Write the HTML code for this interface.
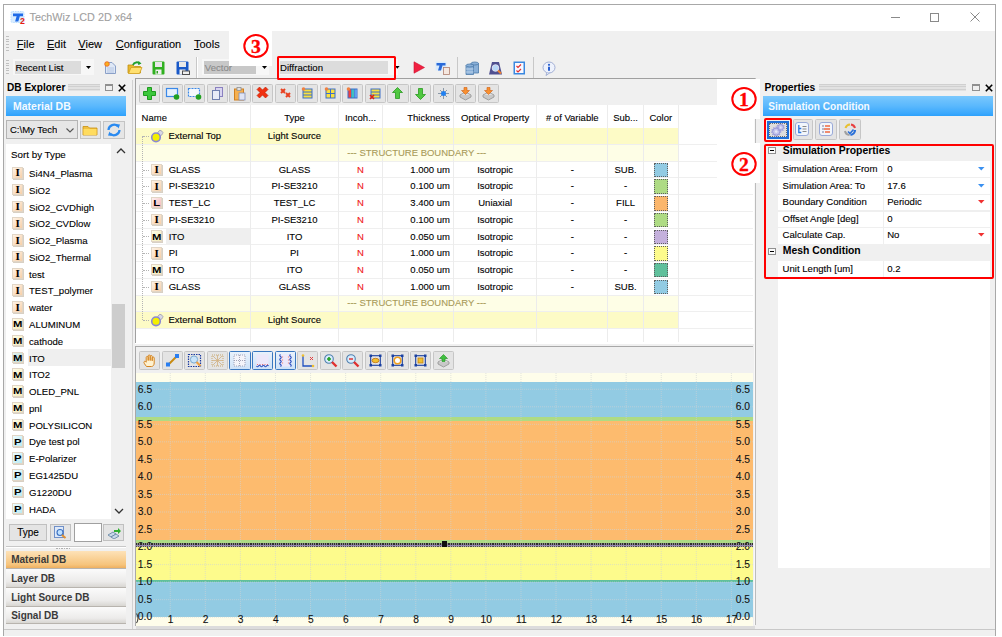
<!DOCTYPE html>
<html><head><meta charset="utf-8">
<style>
html,body{margin:0;padding:0;}
body{width:1002px;height:637px;position:relative;overflow:hidden;background:#fff;font-family:"Liberation Sans", sans-serif;color:#000;}
body div, body svg{position:absolute;}
.t{-webkit-text-stroke:0.1px currentColor;}
</style></head><body>
<div style="left:3.00px;top:4.00px;width:993.00px;height:632.00px;background:#f0f0f0;"></div>
<div style="left:3.00px;top:4.00px;width:993.00px;height:1.00px;background:#a8a8a8;"></div>
<div style="left:3.00px;top:4.00px;width:1.00px;height:632.00px;background:#a8a8a8;"></div>
<div style="left:995.00px;top:4.00px;width:1.00px;height:632.00px;background:#a8a8a8;"></div>
<div style="left:4.00px;top:5.00px;width:991.00px;height:26.00px;background:#fff;"></div>
<svg style="left:9.60px;top:9.80px;" width="16" height="15" viewBox="0 0 16 15"><rect x="1" y="1.5" width="13" height="11" rx="1.5" fill="#d8ecff" stroke="#b8dcff" stroke-width="1" stroke-dasharray="1.5 1"/><path d="M3 3.5h10v2.7h-3.2l-1.5 5.3h-3.2l1.5-5.3h-3.6z" fill="#1e6ae8"/><text x="10" y="13.6" font-family="Liberation Sans" font-weight="bold" font-size="8.8" fill="#e81c10">2</text></svg>
<div class="t" style="left:29.50px;top:12.46px;font-size:10.8px;line-height:10.8px;white-space:nowrap;color:#a0a0a0;">TechWiz LCD 2D x64</div>
<div style="left:890.50px;top:17.00px;width:9.00px;height:1.00px;background:#8a8a8a;"></div>
<div style="left:930.00px;top:12.50px;width:9.00px;height:9.00px;border:1px solid #8a8a8a;box-sizing:border-box;"></div>
<svg style="left:970.00px;top:12.00px;" width="10" height="10" viewBox="0 0 10 10"><path d="M0.5 0.5L9.5 9.5M9.5 0.5L0.5 9.5" stroke="#8a8a8a" stroke-width="1"/></svg>
<div style="left:6.00px;top:36.00px;width:3.00px;height:1.00px;background:#c0c0c0;"></div>
<div style="left:6.00px;top:38.70px;width:3.00px;height:1.00px;background:#c0c0c0;"></div>
<div style="left:6.00px;top:41.40px;width:3.00px;height:1.00px;background:#c0c0c0;"></div>
<div style="left:6.00px;top:44.10px;width:3.00px;height:1.00px;background:#c0c0c0;"></div>
<div style="left:6.00px;top:46.80px;width:3.00px;height:1.00px;background:#c0c0c0;"></div>
<div style="left:6.00px;top:49.50px;width:3.00px;height:1.00px;background:#c0c0c0;"></div>
<div class="t" style="left:16.80px;top:38.69px;font-size:11px;line-height:11px;white-space:nowrap;color:#000;"><u style="text-decoration-thickness:1px;text-underline-offset:1px">F</u>ile</div>
<div class="t" style="left:47.00px;top:38.69px;font-size:11px;line-height:11px;white-space:nowrap;color:#000;"><u style="text-decoration-thickness:1px;text-underline-offset:1px">E</u>dit</div>
<div class="t" style="left:78.30px;top:38.69px;font-size:11px;line-height:11px;white-space:nowrap;color:#000;"><u style="text-decoration-thickness:1px;text-underline-offset:1px">V</u>iew</div>
<div class="t" style="left:115.80px;top:38.69px;font-size:11px;line-height:11px;white-space:nowrap;color:#000;"><u style="text-decoration-thickness:1px;text-underline-offset:1px">C</u>onfiguration</div>
<div class="t" style="left:194.00px;top:38.69px;font-size:11px;line-height:11px;white-space:nowrap;color:#000;"><u style="text-decoration-thickness:1px;text-underline-offset:1px">T</u>ools</div>
<div style="left:6.00px;top:60.00px;width:3.00px;height:1.00px;background:#c0c0c0;"></div>
<div style="left:6.00px;top:62.50px;width:3.00px;height:1.00px;background:#c0c0c0;"></div>
<div style="left:6.00px;top:65.00px;width:3.00px;height:1.00px;background:#c0c0c0;"></div>
<div style="left:6.00px;top:67.50px;width:3.00px;height:1.00px;background:#c0c0c0;"></div>
<div style="left:6.00px;top:70.00px;width:3.00px;height:1.00px;background:#c0c0c0;"></div>
<div style="left:6.00px;top:72.50px;width:3.00px;height:1.00px;background:#c0c0c0;"></div>
<div style="left:13.30px;top:59.00px;width:80.30px;height:16.00px;background:#f7f7f7;"></div>
<div style="left:15.00px;top:61.00px;width:65.70px;height:13.00px;background:#dcdcdc;"></div>
<div class="t" style="left:15.50px;top:63.47px;font-size:9.6px;line-height:9.6px;white-space:nowrap;color:#000;">Recent List</div>
<svg style="left:86.00px;top:65.50px;" width="5" height="3" viewBox="0 0 5 3"><path d="M0 0h5l-2.5 3z" fill="#000"/></svg>
<div style="left:196.00px;top:57.00px;width:1.00px;height:21.00px;background:#c8c8c8;"></div>
<div style="left:197.00px;top:57.00px;width:1.00px;height:21.00px;background:#fff;"></div>
<div style="left:202.40px;top:59.00px;width:66.60px;height:16.00px;background:#f7f7f7;"></div>
<div style="left:204.00px;top:61.00px;width:51.70px;height:13.00px;background:#c8c8c8;"></div>
<div style="left:228.60px;top:31.00px;width:43.60px;height:35.00px;background:#fff;"></div>
<svg style="left:261.50px;top:65.80px;" width="5" height="3" viewBox="0 0 5 3"><path d="M0 0h5l-2.5 3z" fill="#000"/></svg>
<div style="left:280.00px;top:59.00px;width:118.00px;height:16.00px;background:#f7f7f7;"></div>
<div style="left:279.60px;top:61.20px;width:108.80px;height:12.60px;background:#dcdcdc;"></div>
<div class="t" style="left:280.00px;top:63.47px;font-size:9.6px;line-height:9.6px;white-space:nowrap;color:#000;">Diffraction</div>
<svg style="left:394.60px;top:66.30px;" width="5" height="3" viewBox="0 0 5 3"><path d="M0 0h4.6l-2.3 2.8z" fill="#000"/></svg>
<div style="left:457.00px;top:57.00px;width:1.00px;height:21.00px;background:#c8c8c8;"></div>
<div style="left:533.00px;top:57.00px;width:1.00px;height:21.00px;background:#c8c8c8;"></div>
<div style="left:4.00px;top:629.00px;width:991.00px;height:1.00px;background:#c8c8c8;"></div>
<svg style="left:242.40px;top:31.60px;" width="28" height="28" viewBox="0 0 28 28"><ellipse cx="14" cy="14" rx="11.7" ry="11.05" fill="none" stroke="#f00" stroke-width="2"/><text x="14" y="20.9" text-anchor="middle" font-family="Liberation Serif" font-weight="bold" font-size="19.6" fill="#f00" stroke="#f00" stroke-width="0.35">3</text></svg>
<div class="t" style="left:204.80px;top:63.47px;font-size:9.6px;line-height:9.6px;white-space:nowrap;color:#8a8a8a;">Vector</div>
<svg style="left:104.00px;top:60.50px;" width="13" height="14" viewBox="0 0 13 14"><path d="M1.5 1.5h6.5l3.5 3.5v7.5h-10z" fill="#dfe8f6" stroke="#8aa0c8" stroke-width="1"/><path d="M3 7h7M3 9h7M3 11h7" stroke="#a8bce0" stroke-width="0.8"/><circle cx="3" cy="3" r="2.3" fill="#f8b020" stroke="#f06020" stroke-width="0.8"/></svg>
<svg style="left:126.50px;top:59.50px;" width="16" height="15" viewBox="0 0 16 15"><path d="M1 5h5l1.5 1.5h6v6.5H1z" fill="#e8b830" stroke="#c09010" stroke-width="0.8"/><path d="M1.5 13.5l2.5-6h11l-2.5 6z" fill="#ffe070" stroke="#d0a020" stroke-width="0.8"/><path d="M6 5a4 4 0 0 1 7-1" stroke="#20a030" stroke-width="2" fill="none"/><path d="M11.5 1l3 2.5l-3.5 1.5z" fill="#20a030"/></svg>
<svg style="left:151.50px;top:60.50px;" width="13" height="14" viewBox="0 0 13 14"><rect x="0.5" y="0.5" width="12" height="13" rx="1" fill="#30b020"/><rect x="3" y="1" width="7" height="5" fill="#e8e8e8"/><rect x="3.5" y="8.5" width="6" height="5" fill="#f0f0f0"/><rect x="4.5" y="10" width="1.5" height="2.5" fill="#30a020"/></svg>
<svg style="left:175.50px;top:60.50px;" width="14" height="14" viewBox="0 0 14 14"><rect x="0.5" y="0.5" width="12" height="13" rx="1" fill="#1858c8"/><rect x="3" y="1" width="7" height="5" fill="#e8e8e8"/><rect x="3.5" y="8.5" width="6" height="5" fill="#f0f0f0"/><rect x="6" y="9.5" width="8" height="4.5" fill="#505050"/><rect x="7" y="10.5" width="6" height="2.5" fill="#f0f0f0"/></svg>
<svg style="left:412.50px;top:61.00px;" width="12" height="13" viewBox="0 0 12 13"><path d="M1 0.8L11.5 6.5L1 12.2z" fill="#f02040" stroke="#d01030" stroke-width="0.6"/></svg>
<svg style="left:435.00px;top:60.50px;" width="16" height="14" viewBox="0 0 16 14"><rect x="0.5" y="0.5" width="11" height="9" fill="#d4eaff" opacity="0.8"/><path d="M1.5 2h9v2.5h-3l-1.5 5h-3l1.5-5h-3z" fill="#2a6ad8"/><rect x="8.5" y="6.5" width="6" height="7" fill="#f6e8e0" stroke="#b08070" stroke-width="0.8"/></svg>
<svg style="left:464.50px;top:60.50px;" width="15" height="14" viewBox="0 0 15 14"><g fill="#8ab0d8" stroke="#4a78a8" stroke-width="0.8"><path d="M6 2.5h7.5v9.5h-7.5z"/><ellipse cx="9.75" cy="2.5" rx="3.75" ry="1.5"/><path d="M1 4.5h7.5v9h-7.5z"/><ellipse cx="4.75" cy="4.5" rx="3.75" ry="1.5"/></g><path d="M1 8h7.5M1 11h7.5" stroke="#c8dcf0" stroke-width="0.8"/></svg>
<svg style="left:488.00px;top:60.50px;" width="15" height="14" viewBox="0 0 15 14"><path d="M1 13.5L4 1h7l3 12.5z" fill="#505090"/><circle cx="7.5" cy="7" r="3.3" fill="#b8d8f8" stroke="#e0e0f0" stroke-width="1"/><path d="M10 9.5l3 3" stroke="#f08030" stroke-width="2"/></svg>
<svg style="left:512.50px;top:60.50px;" width="13" height="14" viewBox="0 0 13 14"><rect x="0.5" y="0.5" width="11.5" height="13" fill="#3a88e0"/><rect x="2" y="2" width="8.5" height="10" fill="#f8f8ff"/><path d="M3.5 5l1.5 1.5l3-3M3.5 9.5l1.5 1.5l3-3" stroke="#e03030" stroke-width="1.2" fill="none"/></svg>
<svg style="left:541.50px;top:60.50px;" width="14" height="15" viewBox="0 0 14 15"><ellipse cx="7" cy="6.5" rx="6" ry="5.5" fill="#eef2fc" stroke="#9aa8d0" stroke-width="0.9"/><path d="M5 11.5l-1 3l3.5-2.5" fill="#eef2fc" stroke="#9aa8d0" stroke-width="0.9"/><circle cx="7" cy="3.8" r="1.1" fill="#2a60d0"/><path d="M7 5.8v4" stroke="#2a60d0" stroke-width="2"/></svg>
<div style="left:7.00px;top:83.25px;font-size:10.1px;line-height:10.1px;white-space:nowrap;font-weight:bold;">DB Explorer</div>
<div style="left:67.50px;top:83.80px;width:32.50px;height:6.80px;background:repeating-linear-gradient(#d0d0d0 0 1.2px,#e2e2e2 1.2px 2.3px);"></div>
<div style="left:105.00px;top:83.50px;width:8.00px;height:7.50px;border:1px solid #909090;border-top-width:2px;box-sizing:border-box;"></div>
<svg style="left:118.00px;top:84.00px;" width="8" height="8" viewBox="0 0 8 8"><path d="M0.8 0.8L7.2 7.2M7.2 0.8L0.8 7.2" stroke="#000" stroke-width="1.6"/></svg>
<div style="left:6.00px;top:96.20px;width:120.00px;height:20.20px;background:linear-gradient(#7ac8fd,#5ab8fd 50%,#3aa8fd 88%,#2ca0fb);"></div>
<div style="left:13.00px;top:101.41px;font-size:10.5px;line-height:10.5px;white-space:nowrap;font-weight:bold;color:#f4faff;">Material DB</div>
<div style="left:6.00px;top:120.40px;width:71.60px;height:19.00px;background:#e6e6e6;border:1px solid #b4b4b4;box-sizing:border-box;"></div>
<div class="t" style="left:10.00px;top:125.26px;font-size:9.5px;line-height:9.5px;white-space:nowrap;color:#000;overflow:hidden;width:47px;">C:\My TechV</div>
<svg style="left:66.00px;top:128.00px;" width="8" height="5" viewBox="0 0 8 5"><path d="M0.5 0.5L4 4L7.5 0.5" stroke="#555" stroke-width="1.1" fill="none"/></svg>
<div style="left:79.50px;top:120.70px;width:21.30px;height:18.60px;background:#e6e6e6;border:1px solid #c4c4c4;box-sizing:border-box;"></div>
<svg style="left:82.00px;top:124.00px;" width="16" height="12" viewBox="0 0 16 12"><path d="M1 2.5h5l1.5 1.5h7.5v7H1z" fill="#f0c040" stroke="#c89010" stroke-width="0.8"/><rect x="1.5" y="5" width="13" height="6" fill="#ffdc60"/></svg>
<div style="left:103.00px;top:120.70px;width:21.70px;height:18.60px;background:#e6e6e6;border:1px solid #c4c4c4;box-sizing:border-box;"></div>
<svg style="left:106.00px;top:123.00px;" width="16" height="14" viewBox="0 0 16 14"><path d="M2.5 7A5.5 5.5 0 0 1 12 3.5" stroke="#2a8af0" stroke-width="2.2" fill="none"/><path d="M13.5 7A5.5 5.5 0 0 1 4 10.5" stroke="#2a8af0" stroke-width="2.2" fill="none"/><path d="M10 1l4 0.5l-1.5 4z M6 13l-4-0.5l1.5-4z" fill="#2a8af0"/></svg>
<div style="left:5.70px;top:143.80px;width:105.50px;height:375.20px;background:#fff;"></div>
<div class="t" style="left:11.00px;top:149.90px;font-size:9.8px;line-height:9.8px;white-space:nowrap;color:#000;">Sort by Type</div>
<svg style="left:116.00px;top:148.00px;" width="10" height="6" viewBox="0 0 10 6"><path d="M1 5L5 1L9 5" stroke="#333" stroke-width="1.3" fill="none"/></svg>
<div style="left:13.00px;top:168.00px;width:11.30px;height:11.50px;background:#d8d0c4;"></div>
<div style="left:12.00px;top:167.00px;width:11.30px;height:11.50px;background:linear-gradient(135deg,#fff3e6,#f6cfa8);border:1px solid #e2d6c6;box-sizing:border-box;"></div>
<div style="left:12.00px;top:167.49px;font-size:11px;line-height:11px;white-space:nowrap;width:11.30px;text-align:center;font-family:'Liberation Serif',serif;font-weight:bold;">I</div>
<div class="t" style="left:29.00px;top:168.97px;font-size:9.6px;line-height:9.6px;white-space:nowrap;color:#000;">Si4N4_Plasma</div>
<div style="left:13.00px;top:184.78px;width:11.30px;height:11.50px;background:#d8d0c4;"></div>
<div style="left:12.00px;top:183.78px;width:11.30px;height:11.50px;background:linear-gradient(135deg,#fff3e6,#f6cfa8);border:1px solid #e2d6c6;box-sizing:border-box;"></div>
<div style="left:12.00px;top:184.27px;font-size:11px;line-height:11px;white-space:nowrap;width:11.30px;text-align:center;font-family:'Liberation Serif',serif;font-weight:bold;">I</div>
<div class="t" style="left:29.00px;top:185.75px;font-size:9.6px;line-height:9.6px;white-space:nowrap;color:#000;">SiO2</div>
<div style="left:13.00px;top:201.56px;width:11.30px;height:11.50px;background:#d8d0c4;"></div>
<div style="left:12.00px;top:200.56px;width:11.30px;height:11.50px;background:linear-gradient(135deg,#fff3e6,#f6cfa8);border:1px solid #e2d6c6;box-sizing:border-box;"></div>
<div style="left:12.00px;top:201.05px;font-size:11px;line-height:11px;white-space:nowrap;width:11.30px;text-align:center;font-family:'Liberation Serif',serif;font-weight:bold;">I</div>
<div class="t" style="left:29.00px;top:202.53px;font-size:9.6px;line-height:9.6px;white-space:nowrap;color:#000;">SiO2_CVDhigh</div>
<div style="left:13.00px;top:218.34px;width:11.30px;height:11.50px;background:#d8d0c4;"></div>
<div style="left:12.00px;top:217.34px;width:11.30px;height:11.50px;background:linear-gradient(135deg,#fff3e6,#f6cfa8);border:1px solid #e2d6c6;box-sizing:border-box;"></div>
<div style="left:12.00px;top:217.83px;font-size:11px;line-height:11px;white-space:nowrap;width:11.30px;text-align:center;font-family:'Liberation Serif',serif;font-weight:bold;">I</div>
<div class="t" style="left:29.00px;top:219.31px;font-size:9.6px;line-height:9.6px;white-space:nowrap;color:#000;">SiO2_CVDlow</div>
<div style="left:13.00px;top:235.12px;width:11.30px;height:11.50px;background:#d8d0c4;"></div>
<div style="left:12.00px;top:234.12px;width:11.30px;height:11.50px;background:linear-gradient(135deg,#fff3e6,#f6cfa8);border:1px solid #e2d6c6;box-sizing:border-box;"></div>
<div style="left:12.00px;top:234.61px;font-size:11px;line-height:11px;white-space:nowrap;width:11.30px;text-align:center;font-family:'Liberation Serif',serif;font-weight:bold;">I</div>
<div class="t" style="left:29.00px;top:236.09px;font-size:9.6px;line-height:9.6px;white-space:nowrap;color:#000;">SiO2_Plasma</div>
<div style="left:13.00px;top:251.90px;width:11.30px;height:11.50px;background:#d8d0c4;"></div>
<div style="left:12.00px;top:250.90px;width:11.30px;height:11.50px;background:linear-gradient(135deg,#fff3e6,#f6cfa8);border:1px solid #e2d6c6;box-sizing:border-box;"></div>
<div style="left:12.00px;top:251.39px;font-size:11px;line-height:11px;white-space:nowrap;width:11.30px;text-align:center;font-family:'Liberation Serif',serif;font-weight:bold;">I</div>
<div class="t" style="left:29.00px;top:252.87px;font-size:9.6px;line-height:9.6px;white-space:nowrap;color:#000;">SiO2_Thermal</div>
<div style="left:13.00px;top:268.68px;width:11.30px;height:11.50px;background:#d8d0c4;"></div>
<div style="left:12.00px;top:267.68px;width:11.30px;height:11.50px;background:linear-gradient(135deg,#fff3e6,#f6cfa8);border:1px solid #e2d6c6;box-sizing:border-box;"></div>
<div style="left:12.00px;top:268.17px;font-size:11px;line-height:11px;white-space:nowrap;width:11.30px;text-align:center;font-family:'Liberation Serif',serif;font-weight:bold;">I</div>
<div class="t" style="left:29.00px;top:269.65px;font-size:9.6px;line-height:9.6px;white-space:nowrap;color:#000;">test</div>
<div style="left:13.00px;top:285.46px;width:11.30px;height:11.50px;background:#d8d0c4;"></div>
<div style="left:12.00px;top:284.46px;width:11.30px;height:11.50px;background:linear-gradient(135deg,#fff3e6,#f6cfa8);border:1px solid #e2d6c6;box-sizing:border-box;"></div>
<div style="left:12.00px;top:284.95px;font-size:11px;line-height:11px;white-space:nowrap;width:11.30px;text-align:center;font-family:'Liberation Serif',serif;font-weight:bold;">I</div>
<div class="t" style="left:29.00px;top:286.43px;font-size:9.6px;line-height:9.6px;white-space:nowrap;color:#000;">TEST_polymer</div>
<div style="left:13.00px;top:302.24px;width:11.30px;height:11.50px;background:#d8d0c4;"></div>
<div style="left:12.00px;top:301.24px;width:11.30px;height:11.50px;background:linear-gradient(135deg,#fff3e6,#f6cfa8);border:1px solid #e2d6c6;box-sizing:border-box;"></div>
<div style="left:12.00px;top:301.73px;font-size:11px;line-height:11px;white-space:nowrap;width:11.30px;text-align:center;font-family:'Liberation Serif',serif;font-weight:bold;">I</div>
<div class="t" style="left:29.00px;top:303.21px;font-size:9.6px;line-height:9.6px;white-space:nowrap;color:#000;">water</div>
<div style="left:13.00px;top:319.02px;width:11.30px;height:11.50px;background:#d8d0c4;"></div>
<div style="left:12.00px;top:318.02px;width:11.30px;height:11.50px;background:linear-gradient(135deg,#fffde8,#f4ecb8);border:1px solid #e2d6c6;box-sizing:border-box;"></div>
<div style="left:12.00px;top:319.22px;font-size:9.8px;line-height:9.8px;white-space:nowrap;width:11.30px;text-align:center;font-weight:bold;transform:scaleX(1.15);">M</div>
<div class="t" style="left:29.00px;top:319.99px;font-size:9.6px;line-height:9.6px;white-space:nowrap;color:#000;">ALUMINUM</div>
<div style="left:13.00px;top:335.80px;width:11.30px;height:11.50px;background:#d8d0c4;"></div>
<div style="left:12.00px;top:334.80px;width:11.30px;height:11.50px;background:linear-gradient(135deg,#fffde8,#f4ecb8);border:1px solid #e2d6c6;box-sizing:border-box;"></div>
<div style="left:12.00px;top:336.00px;font-size:9.8px;line-height:9.8px;white-space:nowrap;width:11.30px;text-align:center;font-weight:bold;transform:scaleX(1.15);">M</div>
<div class="t" style="left:29.00px;top:336.77px;font-size:9.6px;line-height:9.6px;white-space:nowrap;color:#000;">cathode</div>
<div style="left:28.00px;top:348.58px;width:83.00px;height:17.00px;background:#efefef;"></div>
<div style="left:13.00px;top:352.58px;width:11.30px;height:11.50px;background:#d8d0c4;"></div>
<div style="left:12.00px;top:351.58px;width:11.30px;height:11.50px;background:linear-gradient(135deg,#e6f4f0,#b4d8d0);border:1px solid #e2d6c6;box-sizing:border-box;"></div>
<div style="left:12.00px;top:352.78px;font-size:9.8px;line-height:9.8px;white-space:nowrap;width:11.30px;text-align:center;font-weight:bold;transform:scaleX(1.15);">M</div>
<div class="t" style="left:29.00px;top:353.55px;font-size:9.6px;line-height:9.6px;white-space:nowrap;color:#000;">ITO</div>
<div style="left:13.00px;top:369.36px;width:11.30px;height:11.50px;background:#d8d0c4;"></div>
<div style="left:12.00px;top:368.36px;width:11.30px;height:11.50px;background:linear-gradient(135deg,#fffde8,#f4ecb8);border:1px solid #e2d6c6;box-sizing:border-box;"></div>
<div style="left:12.00px;top:369.56px;font-size:9.8px;line-height:9.8px;white-space:nowrap;width:11.30px;text-align:center;font-weight:bold;transform:scaleX(1.15);">M</div>
<div class="t" style="left:29.00px;top:370.33px;font-size:9.6px;line-height:9.6px;white-space:nowrap;color:#000;">ITO2</div>
<div style="left:13.00px;top:386.14px;width:11.30px;height:11.50px;background:#d8d0c4;"></div>
<div style="left:12.00px;top:385.14px;width:11.30px;height:11.50px;background:linear-gradient(135deg,#fffde8,#f4ecb8);border:1px solid #e2d6c6;box-sizing:border-box;"></div>
<div style="left:12.00px;top:386.34px;font-size:9.8px;line-height:9.8px;white-space:nowrap;width:11.30px;text-align:center;font-weight:bold;transform:scaleX(1.15);">M</div>
<div class="t" style="left:29.00px;top:387.11px;font-size:9.6px;line-height:9.6px;white-space:nowrap;color:#000;">OLED_PNL</div>
<div style="left:13.00px;top:402.92px;width:11.30px;height:11.50px;background:#d8d0c4;"></div>
<div style="left:12.00px;top:401.92px;width:11.30px;height:11.50px;background:linear-gradient(135deg,#fffde8,#f4ecb8);border:1px solid #e2d6c6;box-sizing:border-box;"></div>
<div style="left:12.00px;top:403.12px;font-size:9.8px;line-height:9.8px;white-space:nowrap;width:11.30px;text-align:center;font-weight:bold;transform:scaleX(1.15);">M</div>
<div class="t" style="left:29.00px;top:403.89px;font-size:9.6px;line-height:9.6px;white-space:nowrap;color:#000;">pnl</div>
<div style="left:13.00px;top:419.70px;width:11.30px;height:11.50px;background:#d8d0c4;"></div>
<div style="left:12.00px;top:418.70px;width:11.30px;height:11.50px;background:linear-gradient(135deg,#fffde8,#f4ecb8);border:1px solid #e2d6c6;box-sizing:border-box;"></div>
<div style="left:12.00px;top:419.90px;font-size:9.8px;line-height:9.8px;white-space:nowrap;width:11.30px;text-align:center;font-weight:bold;transform:scaleX(1.15);">M</div>
<div class="t" style="left:29.00px;top:420.67px;font-size:9.6px;line-height:9.6px;white-space:nowrap;color:#000;">POLYSILICON</div>
<div style="left:13.00px;top:436.48px;width:11.30px;height:11.50px;background:#d8d0c4;"></div>
<div style="left:12.00px;top:435.48px;width:11.30px;height:11.50px;background:linear-gradient(135deg,#eefcff,#b8eaf2);border:1px solid #e2d6c6;box-sizing:border-box;"></div>
<div style="left:12.00px;top:436.68px;font-size:9.8px;line-height:9.8px;white-space:nowrap;width:11.30px;text-align:center;font-weight:bold;transform:scaleX(1.15);">P</div>
<div class="t" style="left:29.00px;top:437.45px;font-size:9.6px;line-height:9.6px;white-space:nowrap;color:#000;">Dye test pol</div>
<div style="left:13.00px;top:453.26px;width:11.30px;height:11.50px;background:#d8d0c4;"></div>
<div style="left:12.00px;top:452.26px;width:11.30px;height:11.50px;background:linear-gradient(135deg,#eefcff,#b8eaf2);border:1px solid #e2d6c6;box-sizing:border-box;"></div>
<div style="left:12.00px;top:453.46px;font-size:9.8px;line-height:9.8px;white-space:nowrap;width:11.30px;text-align:center;font-weight:bold;transform:scaleX(1.15);">P</div>
<div class="t" style="left:29.00px;top:454.23px;font-size:9.6px;line-height:9.6px;white-space:nowrap;color:#000;">E-Polarizer</div>
<div style="left:13.00px;top:470.04px;width:11.30px;height:11.50px;background:#d8d0c4;"></div>
<div style="left:12.00px;top:469.04px;width:11.30px;height:11.50px;background:linear-gradient(135deg,#eefcff,#b8eaf2);border:1px solid #e2d6c6;box-sizing:border-box;"></div>
<div style="left:12.00px;top:470.24px;font-size:9.8px;line-height:9.8px;white-space:nowrap;width:11.30px;text-align:center;font-weight:bold;transform:scaleX(1.15);">P</div>
<div class="t" style="left:29.00px;top:471.01px;font-size:9.6px;line-height:9.6px;white-space:nowrap;color:#000;">EG1425DU</div>
<div style="left:13.00px;top:486.82px;width:11.30px;height:11.50px;background:#d8d0c4;"></div>
<div style="left:12.00px;top:485.82px;width:11.30px;height:11.50px;background:linear-gradient(135deg,#eefcff,#b8eaf2);border:1px solid #e2d6c6;box-sizing:border-box;"></div>
<div style="left:12.00px;top:487.02px;font-size:9.8px;line-height:9.8px;white-space:nowrap;width:11.30px;text-align:center;font-weight:bold;transform:scaleX(1.15);">P</div>
<div class="t" style="left:29.00px;top:487.79px;font-size:9.6px;line-height:9.6px;white-space:nowrap;color:#000;">G1220DU</div>
<div style="left:13.00px;top:503.60px;width:11.30px;height:11.50px;background:#d8d0c4;"></div>
<div style="left:12.00px;top:502.60px;width:11.30px;height:11.50px;background:linear-gradient(135deg,#eefcff,#b8eaf2);border:1px solid #e2d6c6;box-sizing:border-box;"></div>
<div style="left:12.00px;top:503.80px;font-size:9.8px;line-height:9.8px;white-space:nowrap;width:11.30px;text-align:center;font-weight:bold;transform:scaleX(1.15);">P</div>
<div class="t" style="left:29.00px;top:504.57px;font-size:9.6px;line-height:9.6px;white-space:nowrap;color:#000;">HADA</div>
<div style="left:112.40px;top:304.30px;width:12.60px;height:63.70px;background:#cdcdcd;"></div>
<svg style="left:114.00px;top:508.00px;" width="10" height="6" viewBox="0 0 10 6"><path d="M1 1L5 5L9 1" stroke="#333" stroke-width="1.3" fill="none"/></svg>
<div style="left:9.00px;top:524.00px;width:38.00px;height:17.00px;background:#e4e4e4;border:1px solid #c0c0c0;box-sizing:border-box;"></div>
<div class="t" style="left:9.00px;top:528.03px;font-size:10px;line-height:10px;white-space:nowrap;width:38.00px;text-align:center;color:#000;">Type</div>
<div style="left:50.00px;top:524.00px;width:21.00px;height:17.00px;background:#e4e4e4;border:1px solid #c0c0c0;box-sizing:border-box;"></div>
<svg style="left:53.00px;top:526.00px;" width="14" height="13" viewBox="0 0 14 13"><rect x="1.5" y="0.5" width="9" height="11" fill="#dde8f8" stroke="#7090c8"/><circle cx="7" cy="6.5" r="3" fill="#bfe0ff" stroke="#3a70c0" stroke-width="1.1"/><path d="M9 9l3.5 3" stroke="#e09030" stroke-width="2"/></svg>
<div style="left:74.00px;top:523.00px;width:27.70px;height:19.00px;background:#fff;border:1px solid #a0a0a0;box-sizing:border-box;"></div>
<div style="left:103.00px;top:524.00px;width:21.30px;height:17.00px;background:#e4e4e4;border:1px solid #c0c0c0;box-sizing:border-box;"></div>
<svg style="left:106.00px;top:526.00px;" width="16" height="13" viewBox="0 0 16 13"><path d="M2 9l5-3l3 2l-5 3z" fill="#c8d8e8" stroke="#6080a0" stroke-width="0.8"/><path d="M5 11l5-3l3 2l-5 3z" fill="#c8d8e8" stroke="#6080a0" stroke-width="0.8"/><path d="M8 4h4v-2l3 3l-3 3v-2h-4z" fill="#30b030"/></svg>
<div style="left:6.00px;top:546.00px;width:120.00px;height:1.00px;background:#c8c8c8;"></div>
<div style="left:6.00px;top:547.00px;width:120.00px;height:1.00px;background:#fff;"></div>
<div style="left:56.00px;top:548.30px;width:1.50px;height:1.00px;background:#b0b0b0;"></div>
<div style="left:58.50px;top:548.30px;width:1.50px;height:1.00px;background:#b0b0b0;"></div>
<div style="left:61.00px;top:548.30px;width:1.50px;height:1.00px;background:#b0b0b0;"></div>
<div style="left:63.50px;top:548.30px;width:1.50px;height:1.00px;background:#b0b0b0;"></div>
<div style="left:66.00px;top:548.30px;width:1.50px;height:1.00px;background:#b0b0b0;"></div>
<div style="left:68.50px;top:548.30px;width:1.50px;height:1.00px;background:#b0b0b0;"></div>
<div style="left:6.00px;top:550.50px;width:120.00px;height:18.90px;background:linear-gradient(#fde2b8,#f6c47c 80%,#eeb060);border-bottom:1px solid #b8b4ae;box-sizing:border-box;"></div>
<div style="left:11.20px;top:555.24px;font-size:10px;line-height:10px;white-space:nowrap;font-weight:bold;color:#3a3a3a;">Material DB</div>
<div style="left:6.00px;top:569.40px;width:120.00px;height:18.60px;background:linear-gradient(#fbfbfb,#ecebea 70%,#d8d6d2);border-bottom:1px solid #b8b4ae;box-sizing:border-box;"></div>
<div style="left:11.20px;top:574.13px;font-size:10px;line-height:10px;white-space:nowrap;font-weight:bold;color:#3a3a3a;">Layer DB</div>
<div style="left:6.00px;top:588.00px;width:120.00px;height:18.50px;background:linear-gradient(#fbfbfb,#ecebea 70%,#d8d6d2);border-bottom:1px solid #b8b4ae;box-sizing:border-box;"></div>
<div style="left:11.20px;top:592.74px;font-size:10px;line-height:10px;white-space:nowrap;font-weight:bold;color:#3a3a3a;">Light Source DB</div>
<div style="left:6.00px;top:606.50px;width:120.00px;height:17.90px;background:linear-gradient(#fbfbfb,#ecebea 70%,#d8d6d2);border-bottom:1px solid #b8b4ae;box-sizing:border-box;"></div>
<div style="left:11.20px;top:611.24px;font-size:10px;line-height:10px;white-space:nowrap;font-weight:bold;color:#3a3a3a;">Signal DB</div>
<div style="left:132.30px;top:80.00px;width:1.20px;height:549.00px;background:#d2d2d2;"></div>
<div style="left:135.30px;top:78.00px;width:618.40px;height:265.50px;background:#fff;"></div>
<div style="left:753.70px;top:78.00px;width:1.40px;height:547.00px;background:#f8f8f8;"></div>
<div style="left:135.30px;top:78.00px;width:619.90px;height:1.00px;background:#a0a0a0;"></div>
<div style="left:135.30px;top:78.00px;width:1.00px;height:264.60px;background:#a0a0a0;"></div>
<div style="left:755.00px;top:78.00px;width:1.20px;height:547.00px;background:#bcbcbc;"></div>
<div style="left:136.30px;top:79.00px;width:617.40px;height:25.50px;background:#f0f0f0;"></div>
<div style="left:139.20px;top:84.00px;width:21.10px;height:18.60px;background:#e4e4e4;border:1px solid #c6c6c6;border-radius:1.5px;box-sizing:border-box;"></div>
<svg style="left:142.20px;top:85.50px;" width="15" height="15" viewBox="0 0 15 15"><path d="M5.5 1.5h4v4h4v4h-4v4h-4v-4h-4v-4h4z" fill="#3cc83c" stroke="#1e9a1e" stroke-width="1"/></svg>
<div style="left:161.77px;top:84.00px;width:21.10px;height:18.60px;background:#e4e4e4;border:1px solid #c6c6c6;border-radius:1.5px;box-sizing:border-box;"></div>
<svg style="left:164.77px;top:85.50px;" width="15" height="15" viewBox="0 0 15 15"><rect x="1.5" y="2.5" width="11" height="8" fill="#e6f0fc" stroke="#3a88e8" stroke-width="1.2"/><circle cx="11.5" cy="11" r="2.8" fill="#20a020"/></svg>
<div style="left:184.34px;top:84.00px;width:21.10px;height:18.60px;background:#e4e4e4;border:1px solid #c6c6c6;border-radius:1.5px;box-sizing:border-box;"></div>
<svg style="left:187.34px;top:85.50px;" width="15" height="15" viewBox="0 0 15 15"><rect x="1.5" y="2.5" width="11" height="8" fill="#f4f8fc" stroke="#3a88e8" stroke-width="1.2" stroke-dasharray="2 1"/><circle cx="11.5" cy="11" r="2.8" fill="#20a020"/></svg>
<div style="left:206.91px;top:84.00px;width:21.10px;height:18.60px;background:#e4e4e4;border:1px solid #c6c6c6;border-radius:1.5px;box-sizing:border-box;"></div>
<svg style="left:209.91px;top:85.50px;" width="15" height="15" viewBox="0 0 15 15"><rect x="5.5" y="1.5" width="7" height="9" fill="#d8d4f0" stroke="#8a80c0"/><rect x="2.5" y="4.5" width="7" height="9" fill="#e8ecf8" stroke="#7080b0"/></svg>
<div style="left:229.48px;top:84.00px;width:21.10px;height:18.60px;background:#e4e4e4;border:1px solid #c6c6c6;border-radius:1.5px;box-sizing:border-box;"></div>
<svg style="left:232.48px;top:85.50px;" width="15" height="15" viewBox="0 0 15 15"><rect x="2.5" y="3" width="9" height="11" fill="#f6b050" stroke="#d08020"/><rect x="5" y="1.5" width="4" height="3" fill="#e0e0e0" stroke="#909090" stroke-width="0.8"/><rect x="7" y="7" width="6" height="7" fill="#dfe4f4" stroke="#8090b8" stroke-width="0.8"/></svg>
<div style="left:252.05px;top:84.00px;width:21.10px;height:18.60px;background:#e4e4e4;border:1px solid #c6c6c6;border-radius:1.5px;box-sizing:border-box;"></div>
<svg style="left:255.05px;top:85.50px;" width="15" height="15" viewBox="0 0 15 15"><path d="M2 3.5l2.5-2.5l3 3l3-3l2.5 2.5l-3 3l3 3l-2.5 2.5l-3-3l-3 3l-2.5-2.5l3-3z" fill="#f03010" stroke="#c02000" stroke-width="0.6"/></svg>
<div style="left:274.62px;top:84.00px;width:21.10px;height:18.60px;background:#e4e4e4;border:1px solid #c6c6c6;border-radius:1.5px;box-sizing:border-box;"></div>
<svg style="left:277.62px;top:85.50px;" width="15" height="15" viewBox="0 0 15 15"><path d="M3 3l4 4M7 3l-4 4M8 7l4 4M12 7l-4 4" stroke="#e84020" stroke-width="2"/></svg>
<div style="left:297.19px;top:84.00px;width:21.10px;height:18.60px;background:#e4e4e4;border:1px solid #c6c6c6;border-radius:1.5px;box-sizing:border-box;"></div>
<svg style="left:300.19px;top:85.50px;" width="15" height="15" viewBox="0 0 15 15"><rect x="2.5" y="2.5" width="10" height="10" fill="#3d6ec8"/><rect x="3.5" y="3.5" width="8" height="2" fill="#f8e040"/><rect x="3.5" y="6.5" width="8" height="2" fill="#f8e040"/><rect x="3.5" y="9.5" width="8" height="2" fill="#f8e040"/><circle cx="3.5" cy="3" r="1.8" fill="#f08040"/></svg>
<div style="left:319.76px;top:84.00px;width:21.10px;height:18.60px;background:#e4e4e4;border:1px solid #c6c6c6;border-radius:1.5px;box-sizing:border-box;"></div>
<svg style="left:322.76px;top:85.50px;" width="15" height="15" viewBox="0 0 15 15"><rect x="2.5" y="2.5" width="10" height="10" fill="#3d6ec8"/><rect x="3.5" y="3.5" width="3.5" height="3.5" fill="#f8e040"/><rect x="8" y="3.5" width="3.5" height="3.5" fill="#f8e040"/><rect x="3.5" y="8" width="3.5" height="3.5" fill="#f8e040"/><rect x="8" y="8" width="3.5" height="3.5" fill="#f8e040"/><circle cx="3.5" cy="3" r="1.8" fill="#f08040"/></svg>
<div style="left:342.33px;top:84.00px;width:21.10px;height:18.60px;background:#e4e4e4;border:1px solid #c6c6c6;border-radius:1.5px;box-sizing:border-box;"></div>
<svg style="left:345.33px;top:85.50px;" width="15" height="15" viewBox="0 0 15 15"><rect x="2.5" y="2.5" width="10" height="10" fill="#3d6ec8"/><rect x="3.5" y="3.5" width="2.5" height="8" fill="#f04040"/><rect x="6.5" y="3.5" width="2.5" height="8" fill="#40c0c0"/><rect x="9.5" y="3.5" width="2.5" height="8" fill="#60a0f0"/><circle cx="3.5" cy="3" r="1.8" fill="#f08040"/></svg>
<div style="left:364.90px;top:84.00px;width:21.10px;height:18.60px;background:#e4e4e4;border:1px solid #c6c6c6;border-radius:1.5px;box-sizing:border-box;"></div>
<svg style="left:367.90px;top:85.50px;" width="15" height="15" viewBox="0 0 15 15"><rect x="2.5" y="2.5" width="10" height="10" fill="#3d6ec8"/><rect x="3.5" y="3.5" width="8" height="2" fill="#f8e040"/><rect x="3.5" y="6.5" width="8" height="2" fill="#f8e040"/><rect x="3.5" y="9.5" width="8" height="2" fill="#f8e040"/><path d="M2 9l4 4M6 9l-4 4" stroke="#e02010" stroke-width="1.6"/></svg>
<div style="left:387.47px;top:84.00px;width:21.10px;height:18.60px;background:#e4e4e4;border:1px solid #c6c6c6;border-radius:1.5px;box-sizing:border-box;"></div>
<svg style="left:390.47px;top:85.50px;" width="15" height="15" viewBox="0 0 15 15"><path d="M7.5 1.5l5 5h-3v6h-4v-6h-3z" fill="#50c840" stroke="#2a9a20" stroke-width="0.8"/></svg>
<div style="left:410.04px;top:84.00px;width:21.10px;height:18.60px;background:#e4e4e4;border:1px solid #c6c6c6;border-radius:1.5px;box-sizing:border-box;"></div>
<svg style="left:413.04px;top:85.50px;" width="15" height="15" viewBox="0 0 15 15"><path d="M7.5 13.5l5-5h-3v-6h-4v6h-3z" fill="#50c840" stroke="#2a9a20" stroke-width="0.8"/></svg>
<div style="left:432.61px;top:84.00px;width:21.10px;height:18.60px;background:#e4e4e4;border:1px solid #c6c6c6;border-radius:1.5px;box-sizing:border-box;"></div>
<svg style="left:435.61px;top:85.50px;" width="15" height="15" viewBox="0 0 15 15"><path d="M7.5 2v11M2 7.5h11M4 4l7 7M11 4l-7 7" stroke="#8090a0" stroke-width="0.9"/><circle cx="7.5" cy="7.5" r="2.5" fill="#2080f0"/></svg>
<div style="left:455.18px;top:84.00px;width:21.10px;height:18.60px;background:#e4e4e4;border:1px solid #c6c6c6;border-radius:1.5px;box-sizing:border-box;"></div>
<svg style="left:458.18px;top:85.50px;" width="15" height="15" viewBox="0 0 15 15"><path d="M2 9l5.5-3l5.5 3l-5.5 3z" fill="#e0e0e0" stroke="#909090" stroke-width="0.8"/><path d="M2 9v2l5.5 3l5.5-3v-2" fill="#c8c8c8" stroke="#909090" stroke-width="0.8"/><path d="M6 1.5h3v3h2.5l-4 4l-4-4h2.5z" fill="#f89030" stroke="#d06010" stroke-width="0.6"/></svg>
<div style="left:477.75px;top:84.00px;width:21.10px;height:18.60px;background:#e4e4e4;border:1px solid #c6c6c6;border-radius:1.5px;box-sizing:border-box;"></div>
<svg style="left:480.75px;top:85.50px;" width="15" height="15" viewBox="0 0 15 15"><path d="M2 9l5.5-3l5.5 3l-5.5 3z" fill="#e0e0e0" stroke="#909090" stroke-width="0.8"/><path d="M2 9v2l5.5 3l5.5-3v-2" fill="#c8c8c8" stroke="#909090" stroke-width="0.8"/><path d="M6 1.5h3v3h2.5l-4 4l-4-4h2.5z" fill="#f89030" stroke="#d06010" stroke-width="0.6"/></svg>
<div class="t" style="left:141.60px;top:113.16px;font-size:9.5px;line-height:9.5px;white-space:nowrap;">Name</div>
<div class="t" style="left:250.40px;top:113.16px;font-size:9.5px;line-height:9.5px;white-space:nowrap;width:88.20px;text-align:center;">Type</div>
<div class="t" style="left:338.60px;top:113.16px;font-size:9.5px;line-height:9.5px;white-space:nowrap;width:43.80px;text-align:center;">Incoh...</div>
<div class="t" style="left:382.40px;top:113.16px;font-size:9.5px;line-height:9.5px;white-space:nowrap;width:67.60px;text-align:right;">Thickness</div>
<div class="t" style="left:453.50px;top:113.16px;font-size:9.5px;line-height:9.5px;white-space:nowrap;width:83.30px;text-align:center;">Optical Property</div>
<div class="t" style="left:536.80px;top:113.16px;font-size:9.5px;line-height:9.5px;white-space:nowrap;width:70.90px;text-align:center;"># of Variable</div>
<div class="t" style="left:607.70px;top:113.16px;font-size:9.5px;line-height:9.5px;white-space:nowrap;width:35.80px;text-align:center;">Sub...</div>
<div class="t" style="left:643.50px;top:113.16px;font-size:9.5px;line-height:9.5px;white-space:nowrap;width:34.50px;text-align:center;">Color</div>
<div style="left:136.30px;top:127.80px;width:541.70px;height:16.72px;background:#fdfbc6;"></div>
<div style="left:136.30px;top:144.52px;width:541.70px;height:16.72px;background:#fefee6;"></div>
<div style="left:136.30px;top:295.00px;width:541.70px;height:16.72px;background:#fefee6;"></div>
<div style="left:136.30px;top:311.72px;width:541.70px;height:16.72px;background:#fdfbc6;"></div>
<div style="left:250.40px;top:228.12px;width:0.00px;height:16.72px;"></div>
<div style="left:166.00px;top:228.62px;width:84.40px;height:16.22px;background:#efefef;"></div>
<div style="left:136.30px;top:144.02px;width:616.70px;height:1.00px;background:#efefef;"></div>
<div style="left:136.30px;top:160.74px;width:616.70px;height:1.00px;background:#efefef;"></div>
<div style="left:136.30px;top:177.46px;width:616.70px;height:1.00px;background:#efefef;"></div>
<div style="left:136.30px;top:194.18px;width:616.70px;height:1.00px;background:#efefef;"></div>
<div style="left:136.30px;top:210.90px;width:616.70px;height:1.00px;background:#efefef;"></div>
<div style="left:136.30px;top:227.62px;width:616.70px;height:1.00px;background:#efefef;"></div>
<div style="left:136.30px;top:244.34px;width:616.70px;height:1.00px;background:#efefef;"></div>
<div style="left:136.30px;top:261.06px;width:616.70px;height:1.00px;background:#efefef;"></div>
<div style="left:136.30px;top:277.78px;width:616.70px;height:1.00px;background:#efefef;"></div>
<div style="left:136.30px;top:294.50px;width:616.70px;height:1.00px;background:#efefef;"></div>
<div style="left:136.30px;top:311.22px;width:616.70px;height:1.00px;background:#efefef;"></div>
<div style="left:136.30px;top:327.94px;width:616.70px;height:1.00px;background:#efefef;"></div>
<div style="left:249.90px;top:105.00px;width:1.00px;height:237.00px;background:#ececec;"></div>
<div style="left:338.10px;top:105.00px;width:1.00px;height:237.00px;background:#ececec;"></div>
<div style="left:381.90px;top:105.00px;width:1.00px;height:237.00px;background:#ececec;"></div>
<div style="left:453.00px;top:105.00px;width:1.00px;height:237.00px;background:#ececec;"></div>
<div style="left:536.30px;top:105.00px;width:1.00px;height:237.00px;background:#ececec;"></div>
<div style="left:607.20px;top:105.00px;width:1.00px;height:237.00px;background:#ececec;"></div>
<div style="left:643.00px;top:105.00px;width:1.00px;height:237.00px;background:#ececec;"></div>
<div style="left:677.50px;top:105.00px;width:1.00px;height:237.00px;background:#ececec;"></div>
<div style="left:677.50px;top:105.00px;width:1.00px;height:237.00px;background:#ececec;"></div>
<div style="left:142px;top:136.30px;width:0;height:183.92px;border-left:1px dotted #b4b4b4;"></div>
<div style="left:143px;top:136.10px;width:6px;height:0;border-top:1px dotted #b4b4b4;"></div>
<div style="left:143px;top:169.54px;width:6px;height:0;border-top:1px dotted #b4b4b4;"></div>
<div style="left:143px;top:186.26px;width:6px;height:0;border-top:1px dotted #b4b4b4;"></div>
<div style="left:143px;top:202.98px;width:6px;height:0;border-top:1px dotted #b4b4b4;"></div>
<div style="left:143px;top:219.70px;width:6px;height:0;border-top:1px dotted #b4b4b4;"></div>
<div style="left:143px;top:236.42px;width:6px;height:0;border-top:1px dotted #b4b4b4;"></div>
<div style="left:143px;top:253.14px;width:6px;height:0;border-top:1px dotted #b4b4b4;"></div>
<div style="left:143px;top:269.86px;width:6px;height:0;border-top:1px dotted #b4b4b4;"></div>
<div style="left:143px;top:286.58px;width:6px;height:0;border-top:1px dotted #b4b4b4;"></div>
<div style="left:143px;top:320.02px;width:6px;height:0;border-top:1px dotted #b4b4b4;"></div>
<svg style="left:150.00px;top:128.60px;" width="14" height="14" viewBox="0 0 14 14"><rect x="8" y="1.5" width="4.5" height="5" rx="1.5" fill="#d8d8e4" stroke="#a0a0b0" stroke-width="0.8" transform="rotate(35 10 4)"/><circle cx="6" cy="8.3" r="4.3" fill="#f4f000" stroke="#8a88d4" stroke-width="1.6"/></svg>
<svg style="left:150.00px;top:312.52px;" width="14" height="14" viewBox="0 0 14 14"><rect x="8" y="1.5" width="4.5" height="5" rx="1.5" fill="#d8d8e4" stroke="#a0a0b0" stroke-width="0.8" transform="rotate(35 10 4)"/><circle cx="6" cy="8.3" r="4.3" fill="#f4f000" stroke="#8a88d4" stroke-width="1.6"/></svg>
<div class="t" style="left:168.50px;top:131.26px;font-size:9.5px;line-height:9.5px;white-space:nowrap;">External Top</div>
<div class="t" style="left:250.40px;top:131.26px;font-size:9.5px;line-height:9.5px;white-space:nowrap;width:88.20px;text-align:center;">Light Source</div>
<div class="t" style="left:168.50px;top:315.18px;font-size:9.5px;line-height:9.5px;white-space:nowrap;">External Bottom</div>
<div class="t" style="left:250.40px;top:315.18px;font-size:9.5px;line-height:9.5px;white-space:nowrap;width:88.20px;text-align:center;">Light Source</div>
<div class="t" style="left:347.30px;top:147.98px;font-size:9.5px;line-height:9.5px;white-space:nowrap;color:#a89a58;">--- STRUCTURE BOUNDARY ---</div>
<div class="t" style="left:347.30px;top:298.46px;font-size:9.5px;line-height:9.5px;white-space:nowrap;color:#a89a58;">--- STRUCTURE BOUNDARY ---</div>
<div style="left:152.00px;top:164.54px;width:11.30px;height:11.50px;background:#d8d0c4;"></div>
<div style="left:151.00px;top:163.54px;width:11.30px;height:11.50px;background:linear-gradient(135deg,#fff3e6,#f6cfa8);border:1px solid #e2d6c6;box-sizing:border-box;"></div>
<div style="left:151.00px;top:164.03px;font-size:11px;line-height:11px;white-space:nowrap;width:11.30px;text-align:center;font-family:'Liberation Serif',serif;font-weight:bold;">I</div>
<div class="t" style="left:168.70px;top:164.70px;font-size:9.5px;line-height:9.5px;white-space:nowrap;">GLASS</div>
<div class="t" style="left:250.40px;top:164.70px;font-size:9.5px;line-height:9.5px;white-space:nowrap;width:88.20px;text-align:center;">GLASS</div>
<div class="t" style="left:338.60px;top:164.70px;font-size:9.5px;line-height:9.5px;white-space:nowrap;width:43.80px;text-align:center;color:#f01818;">N</div>
<div class="t" style="left:382.40px;top:164.70px;font-size:9.5px;line-height:9.5px;white-space:nowrap;width:67.60px;text-align:right;">1.000 um</div>
<div class="t" style="left:453.50px;top:164.70px;font-size:9.5px;line-height:9.5px;white-space:nowrap;width:83.30px;text-align:center;">Isotropic</div>
<div class="t" style="left:536.80px;top:164.70px;font-size:9.5px;line-height:9.5px;white-space:nowrap;width:70.90px;text-align:center;">-</div>
<div class="t" style="left:607.70px;top:164.70px;font-size:9.5px;line-height:9.5px;white-space:nowrap;width:35.80px;text-align:center;">SUB.</div>
<div style="left:654.00px;top:162.74px;width:14.40px;height:14.40px;background:#92cbe3;border:1px dotted #606060;box-sizing:border-box;"></div>
<div style="left:152.00px;top:181.26px;width:11.30px;height:11.50px;background:#d8d0c4;"></div>
<div style="left:151.00px;top:180.26px;width:11.30px;height:11.50px;background:linear-gradient(135deg,#fff3e6,#f6cfa8);border:1px solid #e2d6c6;box-sizing:border-box;"></div>
<div style="left:151.00px;top:180.75px;font-size:11px;line-height:11px;white-space:nowrap;width:11.30px;text-align:center;font-family:'Liberation Serif',serif;font-weight:bold;">I</div>
<div class="t" style="left:168.70px;top:181.42px;font-size:9.5px;line-height:9.5px;white-space:nowrap;">PI-SE3210</div>
<div class="t" style="left:250.40px;top:181.42px;font-size:9.5px;line-height:9.5px;white-space:nowrap;width:88.20px;text-align:center;">PI-SE3210</div>
<div class="t" style="left:338.60px;top:181.42px;font-size:9.5px;line-height:9.5px;white-space:nowrap;width:43.80px;text-align:center;color:#f01818;">N</div>
<div class="t" style="left:382.40px;top:181.42px;font-size:9.5px;line-height:9.5px;white-space:nowrap;width:67.60px;text-align:right;">0.100 um</div>
<div class="t" style="left:453.50px;top:181.42px;font-size:9.5px;line-height:9.5px;white-space:nowrap;width:83.30px;text-align:center;">Isotropic</div>
<div class="t" style="left:536.80px;top:181.42px;font-size:9.5px;line-height:9.5px;white-space:nowrap;width:70.90px;text-align:center;">-</div>
<div class="t" style="left:607.70px;top:181.42px;font-size:9.5px;line-height:9.5px;white-space:nowrap;width:35.80px;text-align:center;">-</div>
<div style="left:654.00px;top:179.46px;width:14.40px;height:14.40px;background:#aedb84;border:1px dotted #606060;box-sizing:border-box;"></div>
<div style="left:152.00px;top:197.98px;width:11.30px;height:11.50px;background:#d8d0c4;"></div>
<div style="left:151.00px;top:196.98px;width:11.30px;height:11.50px;background:linear-gradient(135deg,#fff0f0,#f4b8b8);border:1px solid #e2d6c6;box-sizing:border-box;"></div>
<div style="left:151.00px;top:198.18px;font-size:9.8px;line-height:9.8px;white-space:nowrap;width:11.30px;text-align:center;font-weight:bold;transform:scaleX(1.15);">L</div>
<div class="t" style="left:168.70px;top:198.14px;font-size:9.5px;line-height:9.5px;white-space:nowrap;">TEST_LC</div>
<div class="t" style="left:250.40px;top:198.14px;font-size:9.5px;line-height:9.5px;white-space:nowrap;width:88.20px;text-align:center;">TEST_LC</div>
<div class="t" style="left:338.60px;top:198.14px;font-size:9.5px;line-height:9.5px;white-space:nowrap;width:43.80px;text-align:center;color:#f01818;">N</div>
<div class="t" style="left:382.40px;top:198.14px;font-size:9.5px;line-height:9.5px;white-space:nowrap;width:67.60px;text-align:right;">3.400 um</div>
<div class="t" style="left:453.50px;top:198.14px;font-size:9.5px;line-height:9.5px;white-space:nowrap;width:83.30px;text-align:center;">Uniaxial</div>
<div class="t" style="left:536.80px;top:198.14px;font-size:9.5px;line-height:9.5px;white-space:nowrap;width:70.90px;text-align:center;">-</div>
<div class="t" style="left:607.70px;top:198.14px;font-size:9.5px;line-height:9.5px;white-space:nowrap;width:35.80px;text-align:center;">FILL</div>
<div style="left:654.00px;top:196.18px;width:14.40px;height:14.40px;background:#fbb66c;border:1px dotted #606060;box-sizing:border-box;"></div>
<div style="left:152.00px;top:214.70px;width:11.30px;height:11.50px;background:#d8d0c4;"></div>
<div style="left:151.00px;top:213.70px;width:11.30px;height:11.50px;background:linear-gradient(135deg,#fff3e6,#f6cfa8);border:1px solid #e2d6c6;box-sizing:border-box;"></div>
<div style="left:151.00px;top:214.19px;font-size:11px;line-height:11px;white-space:nowrap;width:11.30px;text-align:center;font-family:'Liberation Serif',serif;font-weight:bold;">I</div>
<div class="t" style="left:168.70px;top:214.86px;font-size:9.5px;line-height:9.5px;white-space:nowrap;">PI-SE3210</div>
<div class="t" style="left:250.40px;top:214.86px;font-size:9.5px;line-height:9.5px;white-space:nowrap;width:88.20px;text-align:center;">PI-SE3210</div>
<div class="t" style="left:338.60px;top:214.86px;font-size:9.5px;line-height:9.5px;white-space:nowrap;width:43.80px;text-align:center;color:#f01818;">N</div>
<div class="t" style="left:382.40px;top:214.86px;font-size:9.5px;line-height:9.5px;white-space:nowrap;width:67.60px;text-align:right;">0.100 um</div>
<div class="t" style="left:453.50px;top:214.86px;font-size:9.5px;line-height:9.5px;white-space:nowrap;width:83.30px;text-align:center;">Isotropic</div>
<div class="t" style="left:536.80px;top:214.86px;font-size:9.5px;line-height:9.5px;white-space:nowrap;width:70.90px;text-align:center;">-</div>
<div class="t" style="left:607.70px;top:214.86px;font-size:9.5px;line-height:9.5px;white-space:nowrap;width:35.80px;text-align:center;">-</div>
<div style="left:654.00px;top:212.90px;width:14.40px;height:14.40px;background:#aedb84;border:1px dotted #606060;box-sizing:border-box;"></div>
<div style="left:152.00px;top:231.42px;width:11.30px;height:11.50px;background:#d8d0c4;"></div>
<div style="left:151.00px;top:230.42px;width:11.30px;height:11.50px;background:linear-gradient(135deg,#fffde8,#f4ecb8);border:1px solid #e2d6c6;box-sizing:border-box;"></div>
<div style="left:151.00px;top:231.62px;font-size:9.8px;line-height:9.8px;white-space:nowrap;width:11.30px;text-align:center;font-weight:bold;transform:scaleX(1.15);">M</div>
<div class="t" style="left:168.70px;top:231.58px;font-size:9.5px;line-height:9.5px;white-space:nowrap;">ITO</div>
<div class="t" style="left:250.40px;top:231.58px;font-size:9.5px;line-height:9.5px;white-space:nowrap;width:88.20px;text-align:center;">ITO</div>
<div class="t" style="left:338.60px;top:231.58px;font-size:9.5px;line-height:9.5px;white-space:nowrap;width:43.80px;text-align:center;color:#f01818;">N</div>
<div class="t" style="left:382.40px;top:231.58px;font-size:9.5px;line-height:9.5px;white-space:nowrap;width:67.60px;text-align:right;">0.050 um</div>
<div class="t" style="left:453.50px;top:231.58px;font-size:9.5px;line-height:9.5px;white-space:nowrap;width:83.30px;text-align:center;">Isotropic</div>
<div class="t" style="left:536.80px;top:231.58px;font-size:9.5px;line-height:9.5px;white-space:nowrap;width:70.90px;text-align:center;">-</div>
<div class="t" style="left:607.70px;top:231.58px;font-size:9.5px;line-height:9.5px;white-space:nowrap;width:35.80px;text-align:center;">-</div>
<div style="left:654.00px;top:229.62px;width:14.40px;height:14.40px;background:#c4b0dc;border:1px dotted #606060;box-sizing:border-box;"></div>
<div style="left:152.00px;top:248.14px;width:11.30px;height:11.50px;background:#d8d0c4;"></div>
<div style="left:151.00px;top:247.14px;width:11.30px;height:11.50px;background:linear-gradient(135deg,#fff3e6,#f6cfa8);border:1px solid #e2d6c6;box-sizing:border-box;"></div>
<div style="left:151.00px;top:247.63px;font-size:11px;line-height:11px;white-space:nowrap;width:11.30px;text-align:center;font-family:'Liberation Serif',serif;font-weight:bold;">I</div>
<div class="t" style="left:168.70px;top:248.30px;font-size:9.5px;line-height:9.5px;white-space:nowrap;">PI</div>
<div class="t" style="left:250.40px;top:248.30px;font-size:9.5px;line-height:9.5px;white-space:nowrap;width:88.20px;text-align:center;">PI</div>
<div class="t" style="left:338.60px;top:248.30px;font-size:9.5px;line-height:9.5px;white-space:nowrap;width:43.80px;text-align:center;color:#f01818;">N</div>
<div class="t" style="left:382.40px;top:248.30px;font-size:9.5px;line-height:9.5px;white-space:nowrap;width:67.60px;text-align:right;">1.000 um</div>
<div class="t" style="left:453.50px;top:248.30px;font-size:9.5px;line-height:9.5px;white-space:nowrap;width:83.30px;text-align:center;">Isotropic</div>
<div class="t" style="left:536.80px;top:248.30px;font-size:9.5px;line-height:9.5px;white-space:nowrap;width:70.90px;text-align:center;">-</div>
<div class="t" style="left:607.70px;top:248.30px;font-size:9.5px;line-height:9.5px;white-space:nowrap;width:35.80px;text-align:center;">-</div>
<div style="left:654.00px;top:246.34px;width:14.40px;height:14.40px;background:#fdfb8c;border:1px dotted #606060;box-sizing:border-box;"></div>
<div style="left:152.00px;top:264.86px;width:11.30px;height:11.50px;background:#d8d0c4;"></div>
<div style="left:151.00px;top:263.86px;width:11.30px;height:11.50px;background:linear-gradient(135deg,#fffde8,#f4ecb8);border:1px solid #e2d6c6;box-sizing:border-box;"></div>
<div style="left:151.00px;top:265.06px;font-size:9.8px;line-height:9.8px;white-space:nowrap;width:11.30px;text-align:center;font-weight:bold;transform:scaleX(1.15);">M</div>
<div class="t" style="left:168.70px;top:265.02px;font-size:9.5px;line-height:9.5px;white-space:nowrap;">ITO</div>
<div class="t" style="left:250.40px;top:265.02px;font-size:9.5px;line-height:9.5px;white-space:nowrap;width:88.20px;text-align:center;">ITO</div>
<div class="t" style="left:338.60px;top:265.02px;font-size:9.5px;line-height:9.5px;white-space:nowrap;width:43.80px;text-align:center;color:#f01818;">N</div>
<div class="t" style="left:382.40px;top:265.02px;font-size:9.5px;line-height:9.5px;white-space:nowrap;width:67.60px;text-align:right;">0.050 um</div>
<div class="t" style="left:453.50px;top:265.02px;font-size:9.5px;line-height:9.5px;white-space:nowrap;width:83.30px;text-align:center;">Isotropic</div>
<div class="t" style="left:536.80px;top:265.02px;font-size:9.5px;line-height:9.5px;white-space:nowrap;width:70.90px;text-align:center;">-</div>
<div class="t" style="left:607.70px;top:265.02px;font-size:9.5px;line-height:9.5px;white-space:nowrap;width:35.80px;text-align:center;">-</div>
<div style="left:654.00px;top:263.06px;width:14.40px;height:14.40px;background:#60c09c;border:1px dotted #606060;box-sizing:border-box;"></div>
<div style="left:152.00px;top:281.58px;width:11.30px;height:11.50px;background:#d8d0c4;"></div>
<div style="left:151.00px;top:280.58px;width:11.30px;height:11.50px;background:linear-gradient(135deg,#fff3e6,#f6cfa8);border:1px solid #e2d6c6;box-sizing:border-box;"></div>
<div style="left:151.00px;top:281.07px;font-size:11px;line-height:11px;white-space:nowrap;width:11.30px;text-align:center;font-family:'Liberation Serif',serif;font-weight:bold;">I</div>
<div class="t" style="left:168.70px;top:281.74px;font-size:9.5px;line-height:9.5px;white-space:nowrap;">GLASS</div>
<div class="t" style="left:250.40px;top:281.74px;font-size:9.5px;line-height:9.5px;white-space:nowrap;width:88.20px;text-align:center;">GLASS</div>
<div class="t" style="left:338.60px;top:281.74px;font-size:9.5px;line-height:9.5px;white-space:nowrap;width:43.80px;text-align:center;color:#f01818;">N</div>
<div class="t" style="left:382.40px;top:281.74px;font-size:9.5px;line-height:9.5px;white-space:nowrap;width:67.60px;text-align:right;">1.000 um</div>
<div class="t" style="left:453.50px;top:281.74px;font-size:9.5px;line-height:9.5px;white-space:nowrap;width:83.30px;text-align:center;">Isotropic</div>
<div class="t" style="left:536.80px;top:281.74px;font-size:9.5px;line-height:9.5px;white-space:nowrap;width:70.90px;text-align:center;">-</div>
<div class="t" style="left:607.70px;top:281.74px;font-size:9.5px;line-height:9.5px;white-space:nowrap;width:35.80px;text-align:center;">SUB.</div>
<div style="left:654.00px;top:279.78px;width:14.40px;height:14.40px;background:#92cbe3;border:1px dotted #606060;box-sizing:border-box;"></div>
<div style="left:135.30px;top:346.00px;width:617.70px;height:1.20px;background:#a8a8a8;"></div>
<div style="left:135.30px;top:346.00px;width:1.00px;height:280.00px;background:#a8a8a8;"></div>
<div style="left:139.20px;top:351.20px;width:21.10px;height:18.60px;background:#e4e4e4;border:1px solid #c6c6c6;border-radius:1.5px;box-sizing:border-box;"></div>
<svg style="left:142.20px;top:352.80px;" width="15" height="15" viewBox="0 0 15 15"><path d="M4.5 13.5C3 11.5 1.5 9.8 2 8.8C2.5 8 3.5 8.2 4.2 9.2V4.5a1 1 0 0 1 2 0V7.5V3a1 1 0 0 1 2 0V7.5V3.5a1 1 0 0 1 2 0V7.8V5a1 1 0 0 1 2 0V10C12.2 12 11 13.5 9.5 13.5Z" fill="#fff2d0" stroke="#d48420" stroke-width="1"/></svg>
<div style="left:161.77px;top:351.20px;width:21.10px;height:18.60px;background:#e4e4e4;border:1px solid #c6c6c6;border-radius:1.5px;box-sizing:border-box;"></div>
<svg style="left:164.77px;top:352.80px;" width="15" height="15" viewBox="0 0 15 15"><path d="M3.5 11.5l8-8" stroke="#c88a10" stroke-width="2"/><rect x="1" y="9.5" width="4" height="4" fill="#2a7ef0"/><rect x="10" y="1" width="4" height="4" fill="#2a7ef0"/></svg>
<div style="left:184.34px;top:351.20px;width:21.10px;height:18.60px;background:#e4e4e4;border:1px solid #c6c6c6;border-radius:1.5px;box-sizing:border-box;"></div>
<svg style="left:187.34px;top:352.80px;" width="15" height="15" viewBox="0 0 15 15"><rect x="1.5" y="1.5" width="12" height="12" fill="none" stroke="#1a3aa0" stroke-width="1.2" stroke-dasharray="1.5 1"/><circle cx="7" cy="6.5" r="3.6" fill="#c8e4fa" stroke="#7aaad0"/><path d="M9.5 9l4 4" stroke="#f0a040" stroke-width="2.2"/></svg>
<div style="left:206.91px;top:351.20px;width:21.10px;height:18.60px;background:#e4e4e4;border:1px solid #c6c6c6;border-radius:1.5px;box-sizing:border-box;"></div>
<svg style="left:209.91px;top:352.80px;" width="15" height="15" viewBox="0 0 15 15"><rect x="2" y="2" width="11" height="11" fill="none" stroke="#c8a870" stroke-width="1" stroke-dasharray="1 1"/><path d="M3 3l9 9M12 3l-9 9M7.5 2v11M2 7.5h11" stroke="#d0b080" stroke-width="0.8"/></svg>
<div style="left:229.48px;top:351.20px;width:21.10px;height:18.60px;background:linear-gradient(#e8f2fc,#cfe2f8);border:1px solid #3a78c0;border-radius:1.5px;box-sizing:border-box;"></div>
<svg style="left:232.48px;top:352.80px;" width="15" height="15" viewBox="0 0 15 15"><rect x="2" y="2" width="11" height="11" fill="#f4f4fa" stroke="#9090a8" stroke-width="0.8" stroke-dasharray="1 1"/><path d="M7.5 2v11M2 7.5h11" stroke="#9090a8" stroke-width="0.8" stroke-dasharray="1 1"/></svg>
<div style="left:252.05px;top:351.20px;width:21.10px;height:18.60px;background:linear-gradient(#e8f2fc,#cfe2f8);border:1px solid #3a78c0;border-radius:1.5px;box-sizing:border-box;"></div>
<svg style="left:255.05px;top:352.80px;" width="15" height="15" viewBox="0 0 15 15"><rect x="1.5" y="1.5" width="12" height="11" fill="#ece8fa"/><path d="M2 11.5h11" stroke="#f07070" stroke-width="1" stroke-dasharray="1 1.5"/><path d="M1.5 13Q2.5 14.5 3.5 13T5.5 13T7.5 13T9.5 13T11.5 13T13.5 13" stroke="#3050c0" stroke-width="1.1" fill="none"/></svg>
<div style="left:274.62px;top:351.20px;width:21.10px;height:18.60px;background:linear-gradient(#e8f2fc,#cfe2f8);border:1px solid #3a78c0;border-radius:1.5px;box-sizing:border-box;"></div>
<svg style="left:277.62px;top:352.80px;" width="15" height="15" viewBox="0 0 15 15"><rect x="3" y="1.5" width="9" height="12" fill="#ece8fa"/><path d="M2.5 1.5Q1 2.5 2.5 3.5T2.5 5.5T2.5 7.5T2.5 9.5T2.5 11.5T2.5 13.5M12.5 1.5Q11 2.5 12.5 3.5T12.5 5.5T12.5 7.5T12.5 9.5T12.5 11.5T12.5 13.5" stroke="#3050c0" stroke-width="1.1" fill="none"/><path d="M4.5 3.5v8M10.5 3.5v8" stroke="#f08070" stroke-width="1.2" stroke-dasharray="1 2"/></svg>
<div style="left:297.19px;top:351.20px;width:21.10px;height:18.60px;background:#e4e4e4;border:1px solid #c6c6c6;border-radius:1.5px;box-sizing:border-box;"></div>
<svg style="left:300.19px;top:352.80px;" width="15" height="15" viewBox="0 0 15 15"><path d="M3 2v11h10" stroke="#2050c0" stroke-width="1.3" fill="none"/><circle cx="3" cy="2.5" r="1.3" fill="#f0c030"/><circle cx="13" cy="13" r="1.3" fill="#f0c030"/><path d="M10 4l3 3M13 4l-3 3" stroke="#e04040" stroke-width="1"/></svg>
<div style="left:319.76px;top:351.20px;width:21.10px;height:18.60px;background:#e4e4e4;border:1px solid #c6c6c6;border-radius:1.5px;box-sizing:border-box;"></div>
<svg style="left:322.76px;top:352.80px;" width="15" height="15" viewBox="0 0 15 15"><circle cx="6" cy="6" r="4.3" fill="#d8ecfc" stroke="#5080b0" stroke-width="1.1"/><path d="M4 6h4M6 4v4" stroke="#20a020" stroke-width="1.6"/><path d="M9 9l4.5 4.5" stroke="#e03030" stroke-width="2.4"/></svg>
<div style="left:342.33px;top:351.20px;width:21.10px;height:18.60px;background:#e4e4e4;border:1px solid #c6c6c6;border-radius:1.5px;box-sizing:border-box;"></div>
<svg style="left:345.33px;top:352.80px;" width="15" height="15" viewBox="0 0 15 15"><circle cx="6" cy="6" r="4.3" fill="#d8ecfc" stroke="#5080b0" stroke-width="1.1"/><path d="M4 6h4" stroke="#e04040" stroke-width="1.6"/><path d="M9 9l4.5 4.5" stroke="#e03030" stroke-width="2.4"/></svg>
<div style="left:364.90px;top:351.20px;width:21.10px;height:18.60px;background:#e4e4e4;border:1px solid #c6c6c6;border-radius:1.5px;box-sizing:border-box;"></div>
<svg style="left:367.90px;top:352.80px;" width="15" height="15" viewBox="0 0 15 15"><rect x="2.7" y="2.7" width="9.6" height="9.6" fill="none" stroke="#1a40a0" stroke-width="1.1"/><rect x="1.5" y="1.5" width="2.5" height="2.5" fill="#1a40a0"/><rect x="11" y="1.5" width="2.5" height="2.5" fill="#1a40a0"/><rect x="1.5" y="11" width="2.5" height="2.5" fill="#1a40a0"/><rect x="11" y="11" width="2.5" height="2.5" fill="#1a40a0"/><ellipse cx="7.5" cy="7.5" rx="3.5" ry="2.2" fill="#f0c030" stroke="#c07010" stroke-width="0.8"/></svg>
<div style="left:387.47px;top:351.20px;width:21.10px;height:18.60px;background:#e4e4e4;border:1px solid #c6c6c6;border-radius:1.5px;box-sizing:border-box;"></div>
<svg style="left:390.47px;top:352.80px;" width="15" height="15" viewBox="0 0 15 15"><rect x="2.7" y="2.7" width="9.6" height="9.6" fill="none" stroke="#1a40a0" stroke-width="1.1"/><rect x="1.5" y="1.5" width="2.5" height="2.5" fill="#1a40a0"/><rect x="11" y="1.5" width="2.5" height="2.5" fill="#1a40a0"/><rect x="1.5" y="11" width="2.5" height="2.5" fill="#1a40a0"/><rect x="11" y="11" width="2.5" height="2.5" fill="#1a40a0"/><circle cx="7.5" cy="7.5" r="3.3" fill="#fff" stroke="#f0a020" stroke-width="1.6"/></svg>
<div style="left:410.04px;top:351.20px;width:21.10px;height:18.60px;background:#e4e4e4;border:1px solid #c6c6c6;border-radius:1.5px;box-sizing:border-box;"></div>
<svg style="left:413.04px;top:352.80px;" width="15" height="15" viewBox="0 0 15 15"><rect x="2.7" y="2.7" width="9.6" height="9.6" fill="none" stroke="#1a40a0" stroke-width="1.1"/><rect x="1.5" y="1.5" width="2.5" height="2.5" fill="#1a40a0"/><rect x="11" y="1.5" width="2.5" height="2.5" fill="#1a40a0"/><rect x="1.5" y="11" width="2.5" height="2.5" fill="#1a40a0"/><rect x="11" y="11" width="2.5" height="2.5" fill="#1a40a0"/><rect x="5" y="5" width="5" height="5" fill="#f0c030" stroke="#c08010" stroke-width="0.8"/></svg>
<div style="left:432.61px;top:351.20px;width:21.10px;height:18.60px;background:#e4e4e4;border:1px solid #c6c6c6;border-radius:1.5px;box-sizing:border-box;"></div>
<svg style="left:435.61px;top:352.80px;" width="15" height="15" viewBox="0 0 15 15"><path d="M2 9l5.5-3l5.5 3l-5.5 3z" fill="#e8e8e8" stroke="#909090" stroke-width="0.8"/><path d="M2 9v2l5.5 3l5.5-3v-2" fill="#c8c8c8" stroke="#909090" stroke-width="0.8"/><path d="M7.5 1.5l4 4h-2.5v3h-3v-3h-2.5z" fill="#40c040" stroke="#209020" stroke-width="0.6"/></svg>
<div style="left:136.30px;top:372.80px;width:616.70px;height:253.20px;background:#fefdea;"></div>
<div style="left:136.30px;top:581.93px;width:616.70px;height:35.07px;background:#92cbe3;"></div>
<div style="left:136.30px;top:580.18px;width:616.70px;height:1.75px;background:#60c09c;"></div>
<div style="left:136.30px;top:545.11px;width:616.70px;height:35.07px;background:#fdfb8c;"></div>
<div style="left:136.30px;top:543.35px;width:616.70px;height:1.75px;background:#c4b0dc;"></div>
<div style="left:136.30px;top:539.85px;width:616.70px;height:3.51px;background:#aedb84;"></div>
<div style="left:136.30px;top:420.61px;width:616.70px;height:119.24px;background:#fdbb6e;"></div>
<div style="left:136.30px;top:417.10px;width:616.70px;height:3.51px;background:#aedb84;"></div>
<div style="left:136.30px;top:382.03px;width:616.70px;height:35.07px;background:#92cbe3;"></div>
<svg style="left:136.30px;top:372.80px;" width="617" height="254" viewBox="0 0 617 254"><g stroke="#d0d4d6" stroke-width="1" stroke-dasharray="1 1" fill="none" opacity="0.6"><path d="M34.27 0V253.20" /><path d="M69.34 0V253.20" /><path d="M104.41 0V253.20" /><path d="M139.48 0V253.20" /><path d="M174.55 0V253.20" /><path d="M209.62 0V253.20" /><path d="M244.69 0V253.20" /><path d="M279.76 0V253.20" /><path d="M314.83 0V253.20" /><path d="M349.90 0V253.20" /><path d="M384.97 0V253.20" /><path d="M420.04 0V253.20" /><path d="M455.11 0V253.20" /><path d="M490.18 0V253.20" /><path d="M525.25 0V253.20" /><path d="M560.32 0V253.20" /><path d="M595.39 0V253.20" /><path d="M0 244.20H616.70" /><path d="M0 226.67H616.70" /><path d="M0 209.13H616.70" /><path d="M0 191.59H616.70" /><path d="M0 174.06H616.70" /><path d="M0 156.53H616.70" /><path d="M0 138.99H616.70" /><path d="M0 121.45H616.70" /><path d="M0 103.92H616.70" /><path d="M0 86.38H616.70" /><path d="M0 68.85H616.70" /><path d="M0 51.31H616.70" /><path d="M0 33.78H616.70" /><path d="M0 16.24H616.70" /></g></svg>
<div class="t" style="left:137.80px;top:612.48px;font-size:10.3px;line-height:10.3px;white-space:nowrap;color:#101010;">0.0</div>
<div class="t" style="left:701.50px;top:612.48px;font-size:10.3px;line-height:10.3px;white-space:nowrap;width:48.50px;text-align:right;color:#101010;">0.0</div>
<div class="t" style="left:137.80px;top:594.95px;font-size:10.3px;line-height:10.3px;white-space:nowrap;color:#101010;">0.5</div>
<div class="t" style="left:701.50px;top:594.95px;font-size:10.3px;line-height:10.3px;white-space:nowrap;width:48.50px;text-align:right;color:#101010;">0.5</div>
<div class="t" style="left:137.80px;top:577.41px;font-size:10.3px;line-height:10.3px;white-space:nowrap;color:#101010;">1.0</div>
<div class="t" style="left:701.50px;top:577.41px;font-size:10.3px;line-height:10.3px;white-space:nowrap;width:48.50px;text-align:right;color:#101010;">1.0</div>
<div class="t" style="left:137.80px;top:559.88px;font-size:10.3px;line-height:10.3px;white-space:nowrap;color:#101010;">1.5</div>
<div class="t" style="left:701.50px;top:559.88px;font-size:10.3px;line-height:10.3px;white-space:nowrap;width:48.50px;text-align:right;color:#101010;">1.5</div>
<div class="t" style="left:137.80px;top:542.34px;font-size:10.3px;line-height:10.3px;white-space:nowrap;color:#101010;">2.0</div>
<div class="t" style="left:701.50px;top:542.34px;font-size:10.3px;line-height:10.3px;white-space:nowrap;width:48.50px;text-align:right;color:#101010;">2.0</div>
<div class="t" style="left:137.80px;top:524.81px;font-size:10.3px;line-height:10.3px;white-space:nowrap;color:#101010;">2.5</div>
<div class="t" style="left:701.50px;top:524.81px;font-size:10.3px;line-height:10.3px;white-space:nowrap;width:48.50px;text-align:right;color:#101010;">2.5</div>
<div class="t" style="left:137.80px;top:507.27px;font-size:10.3px;line-height:10.3px;white-space:nowrap;color:#101010;">3.0</div>
<div class="t" style="left:701.50px;top:507.27px;font-size:10.3px;line-height:10.3px;white-space:nowrap;width:48.50px;text-align:right;color:#101010;">3.0</div>
<div class="t" style="left:137.80px;top:489.74px;font-size:10.3px;line-height:10.3px;white-space:nowrap;color:#101010;">3.5</div>
<div class="t" style="left:701.50px;top:489.74px;font-size:10.3px;line-height:10.3px;white-space:nowrap;width:48.50px;text-align:right;color:#101010;">3.5</div>
<div class="t" style="left:137.80px;top:472.20px;font-size:10.3px;line-height:10.3px;white-space:nowrap;color:#101010;">4.0</div>
<div class="t" style="left:701.50px;top:472.20px;font-size:10.3px;line-height:10.3px;white-space:nowrap;width:48.50px;text-align:right;color:#101010;">4.0</div>
<div class="t" style="left:137.80px;top:454.67px;font-size:10.3px;line-height:10.3px;white-space:nowrap;color:#101010;">4.5</div>
<div class="t" style="left:701.50px;top:454.67px;font-size:10.3px;line-height:10.3px;white-space:nowrap;width:48.50px;text-align:right;color:#101010;">4.5</div>
<div class="t" style="left:137.80px;top:437.13px;font-size:10.3px;line-height:10.3px;white-space:nowrap;color:#101010;">5.0</div>
<div class="t" style="left:701.50px;top:437.13px;font-size:10.3px;line-height:10.3px;white-space:nowrap;width:48.50px;text-align:right;color:#101010;">5.0</div>
<div class="t" style="left:137.80px;top:419.60px;font-size:10.3px;line-height:10.3px;white-space:nowrap;color:#101010;">5.5</div>
<div class="t" style="left:701.50px;top:419.60px;font-size:10.3px;line-height:10.3px;white-space:nowrap;width:48.50px;text-align:right;color:#101010;">5.5</div>
<div class="t" style="left:137.80px;top:402.06px;font-size:10.3px;line-height:10.3px;white-space:nowrap;color:#101010;">6.0</div>
<div class="t" style="left:701.50px;top:402.06px;font-size:10.3px;line-height:10.3px;white-space:nowrap;width:48.50px;text-align:right;color:#101010;">6.0</div>
<div class="t" style="left:137.80px;top:384.53px;font-size:10.3px;line-height:10.3px;white-space:nowrap;color:#101010;">6.5</div>
<div class="t" style="left:701.50px;top:384.53px;font-size:10.3px;line-height:10.3px;white-space:nowrap;width:48.50px;text-align:right;color:#101010;">6.5</div>
<div class="t" style="left:160.57px;top:615.37px;font-size:10.2px;line-height:10.2px;white-space:nowrap;width:20.00px;text-align:center;color:#101010;">1</div>
<div class="t" style="left:195.64px;top:615.37px;font-size:10.2px;line-height:10.2px;white-space:nowrap;width:20.00px;text-align:center;color:#101010;">2</div>
<div class="t" style="left:230.71px;top:615.37px;font-size:10.2px;line-height:10.2px;white-space:nowrap;width:20.00px;text-align:center;color:#101010;">3</div>
<div class="t" style="left:265.78px;top:615.37px;font-size:10.2px;line-height:10.2px;white-space:nowrap;width:20.00px;text-align:center;color:#101010;">4</div>
<div class="t" style="left:300.85px;top:615.37px;font-size:10.2px;line-height:10.2px;white-space:nowrap;width:20.00px;text-align:center;color:#101010;">5</div>
<div class="t" style="left:335.92px;top:615.37px;font-size:10.2px;line-height:10.2px;white-space:nowrap;width:20.00px;text-align:center;color:#101010;">6</div>
<div class="t" style="left:370.99px;top:615.37px;font-size:10.2px;line-height:10.2px;white-space:nowrap;width:20.00px;text-align:center;color:#101010;">7</div>
<div class="t" style="left:406.06px;top:615.37px;font-size:10.2px;line-height:10.2px;white-space:nowrap;width:20.00px;text-align:center;color:#101010;">8</div>
<div class="t" style="left:441.13px;top:615.37px;font-size:10.2px;line-height:10.2px;white-space:nowrap;width:20.00px;text-align:center;color:#101010;">9</div>
<div class="t" style="left:476.20px;top:615.37px;font-size:10.2px;line-height:10.2px;white-space:nowrap;width:20.00px;text-align:center;color:#101010;">10</div>
<div class="t" style="left:511.27px;top:615.37px;font-size:10.2px;line-height:10.2px;white-space:nowrap;width:20.00px;text-align:center;color:#101010;">11</div>
<div class="t" style="left:546.34px;top:615.37px;font-size:10.2px;line-height:10.2px;white-space:nowrap;width:20.00px;text-align:center;color:#101010;">12</div>
<div class="t" style="left:581.41px;top:615.37px;font-size:10.2px;line-height:10.2px;white-space:nowrap;width:20.00px;text-align:center;color:#101010;">13</div>
<div class="t" style="left:616.48px;top:615.37px;font-size:10.2px;line-height:10.2px;white-space:nowrap;width:20.00px;text-align:center;color:#101010;">14</div>
<div class="t" style="left:651.55px;top:615.37px;font-size:10.2px;line-height:10.2px;white-space:nowrap;width:20.00px;text-align:center;color:#101010;">15</div>
<div class="t" style="left:686.62px;top:615.37px;font-size:10.2px;line-height:10.2px;white-space:nowrap;width:20.00px;text-align:center;color:#101010;">16</div>
<div class="t" style="left:721.69px;top:615.37px;font-size:10.2px;line-height:10.2px;white-space:nowrap;width:20.00px;text-align:center;color:#101010;">17</div>
<div style="left:136.30px;top:626.00px;width:618.70px;height:2.50px;background:#dcdcdc;"></div>
<svg style="left:135.50px;top:612.00px;" width="4" height="12" viewBox="0 0 4 12"><path d="M0.5 1.5Q3.5 6 0.5 11" stroke="#404040" stroke-width="1.1" fill="none"/></svg>
<div style="left:136.30px;top:543.00px;width:616.70px;height:1.60px;background:repeating-linear-gradient(90deg,#2e2e2e 0 1.2px,#8a8a8a 1.2px 2.2px);"></div>
<div style="left:136.30px;top:544.60px;width:616.70px;height:1.10px;background:#9484b4;"></div>
<div style="left:136.30px;top:545.70px;width:616.70px;height:1.00px;background:repeating-linear-gradient(90deg,#505050 0 1.2px,#b0b0a0 1.2px 2.2px);"></div>
<div style="left:442.20px;top:541.20px;width:4.60px;height:5.60px;background:#101010;"></div>
<div style="left:764.40px;top:83.08px;font-size:10.3px;line-height:10.3px;white-space:nowrap;font-weight:bold;">Properties</div>
<div style="left:819.00px;top:83.80px;width:147.00px;height:6.80px;background:repeating-linear-gradient(#d0d0d0 0 1.2px,#e2e2e2 1.2px 2.3px);"></div>
<div style="left:971.60px;top:83.50px;width:8.20px;height:7.50px;border:1px solid #909090;border-top-width:2px;box-sizing:border-box;"></div>
<svg style="left:985.00px;top:84.00px;" width="8" height="8" viewBox="0 0 8 8"><path d="M0.8 0.8L7.2 7.2M7.2 0.8L0.8 7.2" stroke="#000" stroke-width="1.6"/></svg>
<div style="left:763.20px;top:96.20px;width:229.80px;height:20.20px;background:linear-gradient(#7ac8fd,#5ab8fd 50%,#3aa8fd 88%,#2ca0fb);"></div>
<div style="left:768.30px;top:101.75px;font-size:10.1px;line-height:10.1px;white-space:nowrap;font-weight:bold;color:#f4faff;">Simulation Condition</div>
<div style="left:767.00px;top:120.50px;width:22.00px;height:18.80px;background:#1f6fd8;"></div>
<div style="left:769.00px;top:122.50px;width:18.00px;height:14.80px;background:#dedede;border:1px dotted #6a6a6a;box-sizing:border-box;"></div>
<svg style="left:771.00px;top:123.00px;" width="14" height="14" viewBox="0 0 14 14"><g fill="#c4c4ec" stroke="#8a8ad0" stroke-width="0.8"><circle cx="5.2" cy="8.6" r="3.6"/><circle cx="9.6" cy="4.4" r="2.9"/></g><g fill="none" stroke="#a0a0dc" stroke-width="1.6" stroke-dasharray="1.2 1.2"><circle cx="5.2" cy="8.6" r="4.3"/><circle cx="9.6" cy="4.4" r="3.5"/></g><circle cx="5.2" cy="8.6" r="1.3" fill="#e6e6f6"/><circle cx="9.6" cy="4.4" r="1" fill="#e6e6f6"/></svg>
<div style="left:792.50px;top:119.00px;width:20.50px;height:20.80px;background:#e4e4e4;border:1px solid #c6c6c6;border-radius:1.5px;box-sizing:border-box;"></div>
<svg style="left:794.50px;top:122.00px;" width="15" height="15" viewBox="0 0 15 15"><rect x="0.5" y="0.5" width="13" height="13" rx="2.5" fill="#f2f6fc" stroke="#9aaad8" stroke-width="1"/><path d="M3.8 3v7.5h2.5M3.8 6.5h2.5" stroke="#2a78e0" stroke-width="1.3" fill="none"/><path d="M7.5 4.5h4M7.5 7h4M7.5 9.5h4" stroke="#8a8a8a" stroke-width="1"/></svg>
<div style="left:814.80px;top:119.00px;width:22.00px;height:20.80px;background:#e4e4e4;border:1px solid #c6c6c6;border-radius:1.5px;box-sizing:border-box;"></div>
<svg style="left:818.50px;top:122.00px;" width="15" height="15" viewBox="0 0 15 15"><rect x="0.5" y="0.5" width="13" height="13" rx="2.5" fill="#f2f6fc" stroke="#9aaad8" stroke-width="1"/><path d="M3 4h2M3 7h2M3 10h2" stroke="#7a7a9a" stroke-width="1"/><path d="M6 4h5M5 7h6M6 10h5" stroke="#f06a40" stroke-width="1.4"/></svg>
<div style="left:838.50px;top:119.00px;width:22.00px;height:20.80px;background:#e4e4e4;border:1px solid #c6c6c6;border-radius:1.5px;box-sizing:border-box;"></div>
<svg style="left:841.50px;top:121.50px;" width="16" height="16" viewBox="0 0 16 16"><path d="M3.5 6A5 5 0 0 1 8 2.5" stroke="#e8c030" stroke-width="2" fill="none"/><path d="M9 2.5A5 5 0 0 1 13 6" stroke="#e84040" stroke-width="2" fill="none"/><path d="M13 8A5 5 0 0 1 8.5 13" stroke="#2a70d8" stroke-width="2.2" fill="none"/><path d="M7.5 13A5 5 0 0 1 3 9" stroke="#a0a0a0" stroke-width="2" fill="none"/><path d="M6 9.5l2 2l3.5-4" stroke="#2a70d8" stroke-width="1.6" fill="none"/></svg>
<div style="left:764.00px;top:146.60px;width:226.00px;height:15.00px;background:#f0f0f0;"></div>
<div style="left:778.20px;top:161.20px;width:211.80px;height:406.50px;background:#fff;"></div>
<div style="left:768.10px;top:147.20px;width:7.50px;height:7.20px;background:#fafafa;border:1px solid #909090;box-sizing:border-box;"></div>
<div style="left:769.80px;top:150.40px;width:4.00px;height:1.00px;background:#000;"></div>
<div style="left:782.80px;top:145.80px;font-size:10.4px;line-height:10.4px;white-space:nowrap;font-weight:bold;">Simulation Properties</div>
<div class="t" style="left:782.50px;top:163.97px;font-size:9.6px;line-height:9.6px;white-space:nowrap;">Simulation Area: From</div>
<div class="t" style="left:887.20px;top:164.07px;font-size:9.6px;line-height:9.6px;white-space:nowrap;">0</div>
<svg style="left:977.80px;top:166.90px;" width="7" height="4" viewBox="0 0 7 4"><path d="M0 0h6.5l-3.25 3.5z" fill="#3a90f0"/></svg>
<div style="left:778.20px;top:177.20px;width:211.80px;height:1.20px;background:#efefef;"></div>
<div class="t" style="left:782.50px;top:180.57px;font-size:9.6px;line-height:9.6px;white-space:nowrap;">Simulation Area: To</div>
<div class="t" style="left:887.20px;top:180.67px;font-size:9.6px;line-height:9.6px;white-space:nowrap;">17.6</div>
<svg style="left:977.80px;top:183.50px;" width="7" height="4" viewBox="0 0 7 4"><path d="M0 0h6.5l-3.25 3.5z" fill="#3a90f0"/></svg>
<div style="left:778.20px;top:193.80px;width:211.80px;height:1.20px;background:#efefef;"></div>
<div class="t" style="left:782.50px;top:197.17px;font-size:9.6px;line-height:9.6px;white-space:nowrap;">Boundary Condition</div>
<div class="t" style="left:887.20px;top:197.27px;font-size:9.6px;line-height:9.6px;white-space:nowrap;">Periodic</div>
<svg style="left:977.80px;top:200.10px;" width="7" height="4" viewBox="0 0 7 4"><path d="M0 0h6.5l-3.25 3.5z" fill="#f03030"/></svg>
<div style="left:778.20px;top:210.40px;width:211.80px;height:1.20px;background:#efefef;"></div>
<div class="t" style="left:782.50px;top:213.77px;font-size:9.6px;line-height:9.6px;white-space:nowrap;">Offset Angle [deg]</div>
<div class="t" style="left:887.20px;top:213.87px;font-size:9.6px;line-height:9.6px;white-space:nowrap;">0</div>
<div style="left:778.20px;top:227.00px;width:211.80px;height:1.20px;background:#efefef;"></div>
<div class="t" style="left:782.50px;top:230.37px;font-size:9.6px;line-height:9.6px;white-space:nowrap;">Calculate Cap.</div>
<div class="t" style="left:887.20px;top:230.47px;font-size:9.6px;line-height:9.6px;white-space:nowrap;">No</div>
<svg style="left:977.80px;top:233.30px;" width="7" height="4" viewBox="0 0 7 4"><path d="M0 0h6.5l-3.25 3.5z" fill="#f03030"/></svg>
<div style="left:883.00px;top:161.20px;width:1.00px;height:83.00px;background:#efefef;"></div>
<div style="left:764.00px;top:244.20px;width:226.00px;height:17.00px;background:#f0f0f0;"></div>
<div style="left:768.10px;top:247.50px;width:7.50px;height:7.20px;background:#fafafa;border:1px solid #909090;box-sizing:border-box;"></div>
<div style="left:769.80px;top:250.70px;width:4.00px;height:1.00px;background:#000;"></div>
<div style="left:782.80px;top:246.40px;font-size:10.4px;line-height:10.4px;white-space:nowrap;font-weight:bold;">Mesh Condition</div>
<div class="t" style="left:782.50px;top:263.77px;font-size:9.6px;line-height:9.6px;white-space:nowrap;">Unit Length [um]</div>
<div class="t" style="left:887.20px;top:263.87px;font-size:9.6px;line-height:9.6px;white-space:nowrap;">0.2</div>
<div style="left:883.00px;top:261.20px;width:1.00px;height:16.60px;background:#efefef;"></div>
<div style="left:778.20px;top:277.30px;width:211.80px;height:1.50px;background:#f0f0f0;"></div>
<div style="left:764px;top:117.8px;width:28px;height:24px;border:2.5px solid #f00;border-radius:2px;box-sizing:border-box;"></div>
<div style="left:764px;top:144.2px;width:229.5px;height:135.2px;border:2.5px solid #f00;border-radius:2px;box-sizing:border-box;"></div>
<div style="left:277.1px;top:56px;width:118.5px;height:24.2px;border:2.6px solid #f00;border-radius:1.5px;box-sizing:border-box;"></div>
<div style="left:717.00px;top:79.00px;width:43.30px;height:40.10px;background:#fff;"></div>
<div style="left:717.00px;top:142.70px;width:43.30px;height:40.50px;background:#fff;"></div>
<svg style="left:730.10px;top:84.80px;" width="28" height="28" viewBox="0 0 28 28"><ellipse cx="14" cy="14" rx="11.7" ry="11.05" fill="none" stroke="#f00" stroke-width="2"/><text x="14" y="20.9" text-anchor="middle" font-family="Liberation Serif" font-weight="bold" font-size="19.6" fill="#f00" stroke="#f00" stroke-width="0.35">1</text></svg>
<svg style="left:730.10px;top:149.60px;" width="28" height="28" viewBox="0 0 28 28"><ellipse cx="14" cy="14" rx="11.7" ry="11.05" fill="none" stroke="#f00" stroke-width="2"/><text x="14" y="20.9" text-anchor="middle" font-family="Liberation Serif" font-weight="bold" font-size="19.6" fill="#f00" stroke="#f00" stroke-width="0.35">2</text></svg>
</body></html>
